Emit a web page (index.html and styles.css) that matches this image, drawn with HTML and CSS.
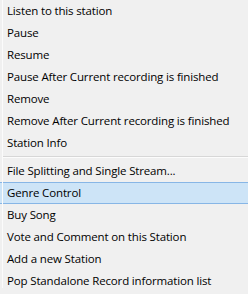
FILE: index.html
```html
<!DOCTYPE html>
<html>
<head>
<meta charset="utf-8">
<link rel="stylesheet" href="styles.css">
</head>
<body>
<div class="menu">
  <div class="item">Listen to this station</div>
  <div class="item">Pause</div>
  <div class="item">Resume</div>
  <div class="item">Pause After Current recording is finished</div>
  <div class="item">Remove</div>
  <div class="item">Remove After Current recording is finished</div>
  <div class="item">Station Info</div>
  <div class="sep"></div>
  <div class="item">File Splitting and Single Stream...</div>
  <div class="item hover">Genre Control</div>
  <div class="item">Buy Song</div>
  <div class="item">Vote and Comment on this Station</div>
  <div class="item">Add a new Station</div>
  <div class="item">Pop Standalone Record information list</div>
</div>
</body>
</html>
```
FILE: styles.css
```css
html, body {
  margin: 0;
  padding: 0;
  background: #f0f0f0;
}
body {
  width: 248px;
  height: 294px;
  overflow: hidden;
}
.menu {
  position: relative;
  display: flex;
  flex-direction: column;
  font-family: "Open Sans", "Noto Sans", sans-serif;
  font-size: 11.5px;
  letter-spacing: -0.15px;
  color: #000;
}
.menu::before {
  content: "";
  position: absolute;
  left: 2px;
  top: 0;
  height: 288px;
  width: 1px;
  background: #fbfbfb;
}
.item {
  height: 22px;
  line-height: 22px;
  padding-left: 7px;
  white-space: nowrap;
  box-sizing: border-box;
}
.item.hover {
  background: #cde4f7;
  border-top: 1px solid #87b6e6;
  border-bottom: 1px solid #87b6e6;
  line-height: 20px;
}
.sep {
  height: 6px;
  box-sizing: border-box;
  padding-top: 2px;
}
.sep::after {
  content: "";
  display: block;
  margin-left: 3px;
  height: 1px;
  background: #d7d7d7;
  border-bottom: 1px solid #fcfcfc;
}
```
